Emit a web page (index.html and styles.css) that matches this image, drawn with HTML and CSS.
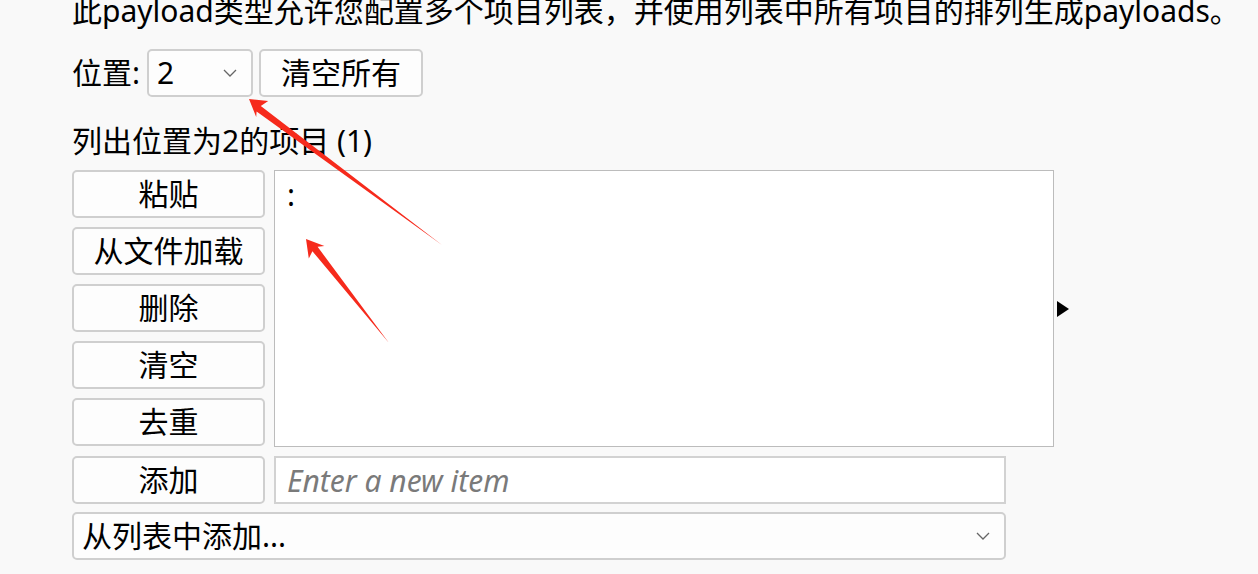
FILE: index.html
```html
<!DOCTYPE html>
<html lang="zh-CN">
<head>
    <meta charset="UTF-8">
    <meta name="viewport" content="width=device-width, initial-scale=1.0">
    <title>Payload Positions</title>
    <link rel="stylesheet" href="styles.css">
</head>
<body>

    <main class="page">

        <p class="intro">此payload类型允许您配置多个项目列表，并使用列表中所有项目的排列生成payloads。</p>

        <div class="pos-row">
            <label for="position">位置:</label>
            <div class="select-wrap pos-select">
                <select id="position">
                    <option>1</option>
                    <option selected>2</option>
                </select>
                <svg class="chevron" width="14" height="8" viewBox="0 0 14 8"><path d="M1 1l6 6 6-6"/></svg>
            </div>
            <button class="btn clear-all">清空所有</button>
        </div>

        <div class="list-title">列出位置为2的项目 (1)</div>

        <div class="editor">
            <div class="btn-stack">
                <button class="btn">粘贴</button>
                <button class="btn">从文件加载</button>
                <button class="btn">删除</button>
                <button class="btn">清空</button>
                <button class="btn">去重</button>
            </div>
            <textarea class="items">:</textarea>
            <span class="expand"></span>

            <button class="btn">添加</button>
            <input type="text" class="new-item" placeholder="Enter a new item">

            <div class="select-wrap from-list">
                <select>
                    <option>从列表中添加...</option>
                </select>
                <svg class="chevron" width="14" height="8" viewBox="0 0 14 8"><path d="M1 1l6 6 6-6"/></svg>
            </div>
        </div>
    </main>

    <!-- annotation arrows drawn over the screenshot -->
    <svg class="marks" width="1258" height="574" viewBox="0 0 1258 574">
        <polygon points="442,245 256.6,111.4 256.2,116.9 249,99 268.2,101 260.8,106"/>
        <polygon points="389,343 312.4,251.2 308.8,258.5 306,239 324.4,246.1 317.6,246.8"/>
    </svg>

</body>
</html>
```

FILE: styles.css
```css
*{
    box-sizing: border-box;
}

body{
    margin: 0;
    background-color: #f9f9f9;
    color: #000;
    font-family: "Noto Sans", "Noto Sans CJK SC", sans-serif;
    font-size: 30px;
    line-height: 40px;
}

.page{
    padding-left: 72px;
}

.intro{
    margin: -9px 0 0;
    white-space: nowrap;
}

.pos-row{
    display: flex;
    align-items: center;
    margin-top: 18px;
}

.pos-row label{
    margin-right: 7px;
}

.btn{
    height: 48px;
    padding: 0;
    font: inherit;
    color: #000;
    background-color: #fdfdfd;
    border: 2px solid #cfcfcf;
    border-radius: 5px;
    cursor: pointer;
}

.btn:focus{
    outline: none;
}

.clear-all{
    width: 164px;
    margin-left: 6px;
}

.select-wrap{
    position: relative;
    height: 48px;
}

.select-wrap select{
    appearance: none;
    width: 100%;
    height: 100%;
    padding: 0 40px 0 8px;
    font: inherit;
    color: #000;
    background-color: #fdfdfd;
    border: 2px solid #cfcfcf;
    border-radius: 5px;
}

.select-wrap select:focus{
    outline: none;
}

.chevron{
    position: absolute;
    right: 16px;
    top: 20px;
    fill: none;
    stroke: #666;
    stroke-width: 1.3;
    pointer-events: none;
}

.pos-select{
    width: 106px;
}

.list-title{
    margin-top: 24px;
    margin-bottom: 9px;
}

.editor{
    display: grid;
    grid-template-columns: 193px 780px auto;
    column-gap: 9px;
    row-gap: 9px;
}

.btn-stack{
    display: flex;
    flex-direction: column;
    gap: 9px;
}

.items{
    height: 277px;
    padding: 4px 12px;
    font: inherit;
    background-color: #fff;
    border: 1px solid #bcbcbc;
    border-radius: 0;
    resize: none;
}

.items:focus{
    outline: none;
}

.expand{
    align-self: center;
    margin-left: -6px;
    width: 0;
    height: 0;
    border-left: 12px solid #000;
    border-top: 8px solid transparent;
    border-bottom: 8px solid transparent;
}

.new-item{
    width: 732px;
    height: 48px;
    padding: 0 11px;
    font: inherit;
    background-color: #fff;
    border: 2px solid #d2d2d2;
    border-radius: 0;
}

.new-item::placeholder{
    color: #7a7a7a;
    font-style: italic;
}

.new-item:focus{
    outline: none;
}

.from-list{
    grid-column: 1 / 3;
    width: 934px;
    margin-top: -1px;
}

.marks{
    position: absolute;
    top: 0;
    left: 0;
    pointer-events: none;
}

.marks polygon{
    fill: #f62a1c;
}
```
